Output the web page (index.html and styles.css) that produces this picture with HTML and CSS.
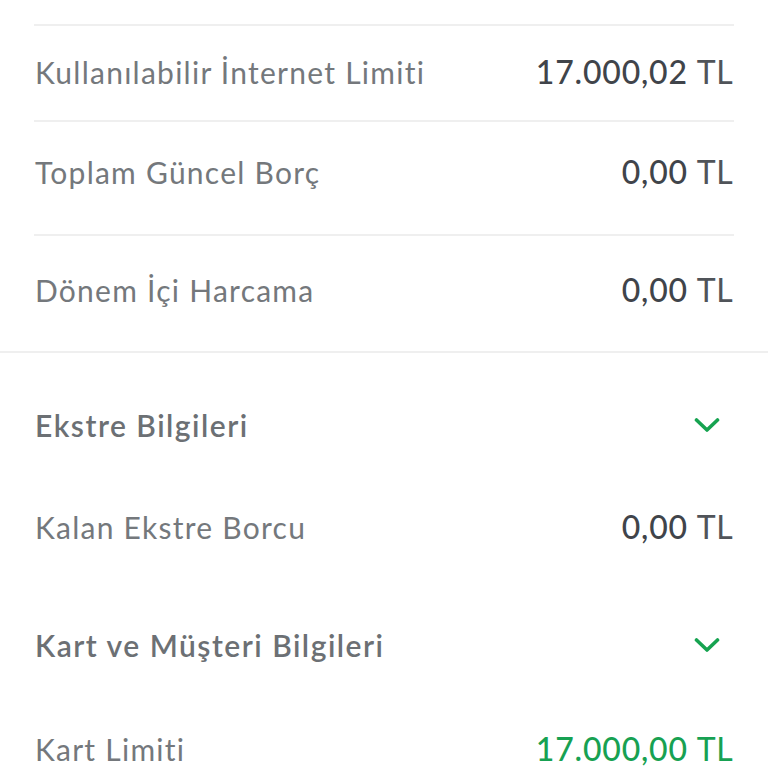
FILE: index.html
```html
<!DOCTYPE html>
<html lang="tr">
<head>
<meta charset="utf-8">
<title>Kart Bilgileri</title>
<link rel="stylesheet" href="styles.css">
</head>
<body>
<div class="page">
  <section class="summary">
    <div class="row row-1">
      <span class="label">Kullanılabilir İnternet Limiti</span>
      <span class="value"><span class="amount">17.000,02</span> <span class="cur">TL</span></span>
    </div>
    <div class="row row-2">
      <span class="label">Toplam Güncel Borç</span>
      <span class="value"><span class="amount">0,00</span> <span class="cur">TL</span></span>
    </div>
    <div class="row row-3">
      <span class="label">Dönem İçi Harcama</span>
      <span class="value"><span class="amount">0,00</span> <span class="cur">TL</span></span>
    </div>
  </section>
  <section class="details">
    <div class="group-head head-1">
      <span class="head-title">Ekstre Bilgileri</span>
      <svg class="chev" width="26" height="16" viewBox="0 0 26 16"><path d="M2.5 3 L13 13 L23.5 3" fill="none" stroke="#16a350" stroke-width="3.6" stroke-linecap="round" stroke-linejoin="round"/></svg>
    </div>
    <div class="item item-1">
      <span class="label">Kalan Ekstre Borcu</span>
      <span class="value"><span class="amount">0,00</span> <span class="cur">TL</span></span>
    </div>
    <div class="group-head head-2">
      <span class="head-title">Kart ve Müşteri Bilgileri</span>
      <svg class="chev" width="26" height="16" viewBox="0 0 26 16"><path d="M2.5 3 L13 13 L23.5 3" fill="none" stroke="#16a350" stroke-width="3.6" stroke-linecap="round" stroke-linejoin="round"/></svg>
    </div>
    <div class="item item-2">
      <span class="label">Kart Limiti</span>
      <span class="value green"><span class="amount">17.000,00</span> <span class="cur">TL</span></span>
    </div>
  </section>
</div>
</body>
</html>
```

FILE: styles.css
```css
* { box-sizing: border-box; }
html, body { margin: 0; padding: 0; background: #ffffff; }
body {
  font-family: Lato, "Noto Sans", "Open Sans", sans-serif;
  color: #6f7377;
  overflow: hidden;
  height: 768px;
}
.page { padding-top: 24px; }
.summary {
  margin: 0 34px;
  border-top: 2px solid #efefef;
}
.row {
  display: flex;
  justify-content: space-between;
  align-items: center;
  border-bottom: 2px solid #efefef;
}
.row-3 { border-bottom: none; }
.row-1 { padding: 28px 1px 30px 1px; }
.row-2 { padding: 32px 1px 44px 1px; }
.row-3 { padding: 36px 1px 43px 1px; }
.label {
  font-size: 30px;
  line-height: 36px;
  font-weight: 400;
  color: #74787c;
  letter-spacing: 1.25px;
}
.value {
  font-size: 32px;
  line-height: 36px;
  color: #40444a;
  white-space: nowrap;
  letter-spacing: 0.8px;
}
.amount { font-weight: 500; }
.cur { font-weight: 400; color: #505459; letter-spacing: 0.4px; }
.green .amount, .green .cur { color: #17a152; }
.details {
  border-top: 2px solid #efefef;
  padding: 0 35px;
}
.group-head, .item {
  display: flex;
  justify-content: space-between;
  align-items: center;
}
.head-title {
  font-size: 30px;
  line-height: 36px;
  font-weight: 600;
  color: #6c7074;
  letter-spacing: 1.5px;
}
.chev { margin-right: 13px; display: block; }
.head-1 { padding-top: 54px; }
.item-1 { padding-top: 66px; }
.head-2 { padding-top: 82px; }
.item-2 { padding-top: 68px; }
```
